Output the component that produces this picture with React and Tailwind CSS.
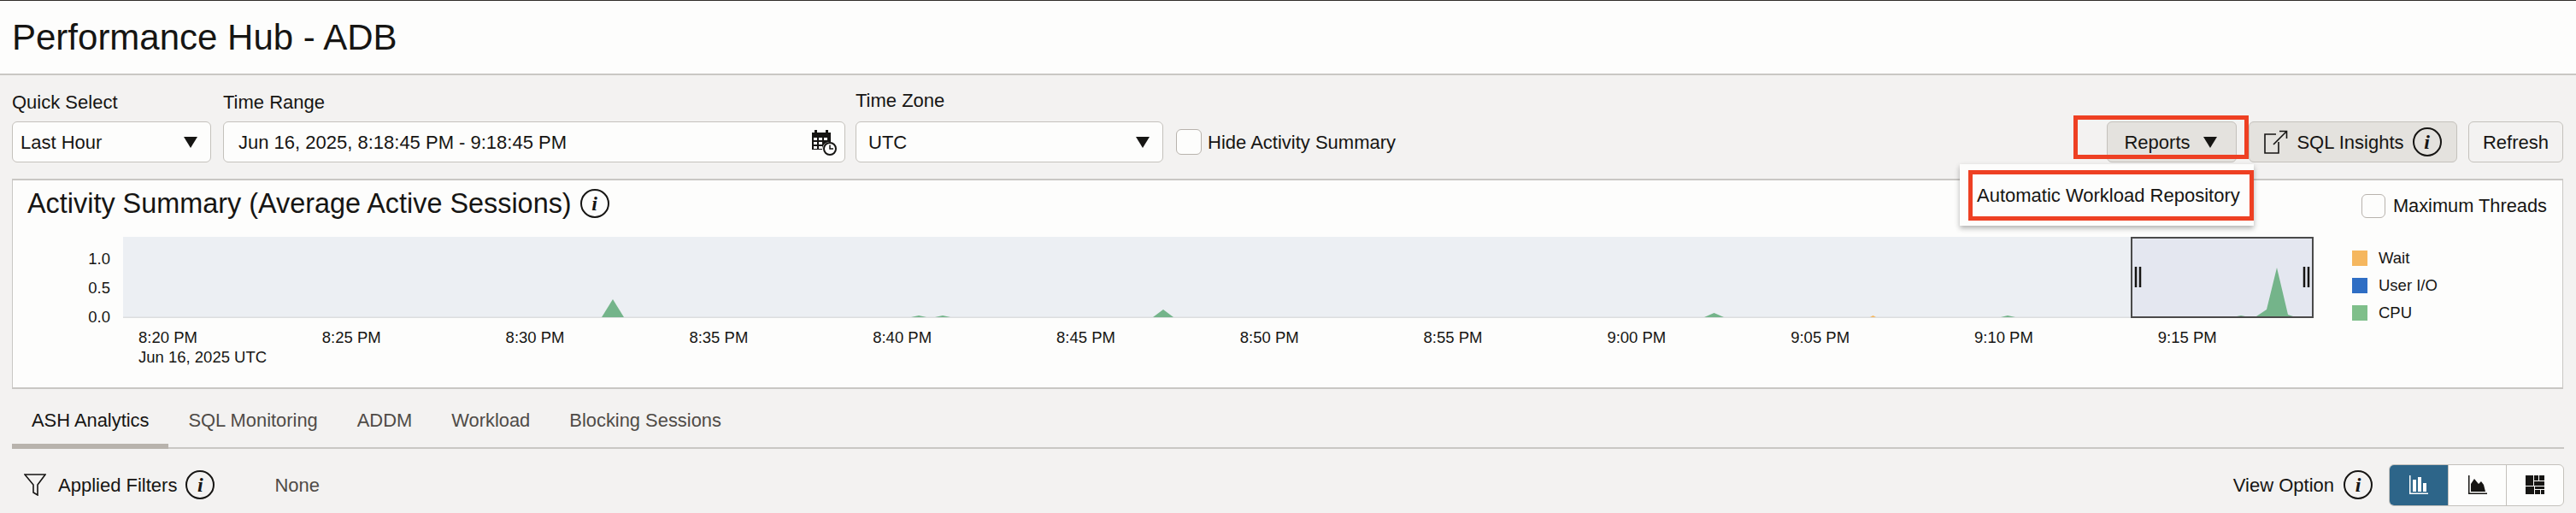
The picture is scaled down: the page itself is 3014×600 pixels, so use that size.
const xTicks = ['8:20 PM','8:25 PM','8:30 PM','8:35 PM','8:40 PM','8:45 PM','8:50 PM','8:55 PM','9:00 PM','9:05 PM','9:10 PM','9:15 PM']
const legend = [['Wait','bg-[#f5b75f]'],['User I/O','bg-[#2f6ec4]'],['CPU','bg-[#7fbf8a]']]
const tabs = ['ASH Analytics','SQL Monitoring','ADDM','Workload','Blocking Sessions']

function Info({ className = '' }) {
  return (
    <span className={`flex h-[34px] w-[34px] shrink-0 items-center justify-center rounded-full border-2 border-[#161513] font-['Liberation_Serif',serif] text-[24px] font-bold italic leading-none ${className}`}>i</span>
  )
}

function Caret() {
  return <svg width="16" height="14" viewBox="0 0 16 14" className="shrink-0"><path d="M0 1h16L8 14z" fill="#161513"/></svg>
}

function CalendarClock() {
  return (
    <svg width="30" height="32" viewBox="0 0 30 32">
      <path d="M1 5h3V2h3v3h10V2h3v3h3v11h-3a9 9 0 0 0-7 9H1z" fill="#161513"/>
      <path d="M3 11h4v3H3zm6 0h4v3H9zm6 0h4v3h-4zM3 16h4v3H3zm6 0h4v3H9zM3 21h4v3H3zm6 0h4v3H9z" fill="#fff"/>
      <circle cx="22" cy="24" r="7" fill="#fff" stroke="#161513" strokeWidth="2"/>
      <path d="M22 19.5V24h4" fill="none" stroke="#161513" strokeWidth="1.5"/>
    </svg>
  )
}

function ActivityChart() {
  return (
    <svg viewBox="144 277 2563 95" className="block h-[95px] w-[2563px]">
      <rect x="144" y="277" width="2563" height="95" fill="#eceff3"/>
      <rect x="144" y="370.5" width="2563" height="1.5" fill="#dcdedf"/>
      <g fill="#74b48a">
        <path d="M704 371L717 350L730 371z"/>
        <path d="M1066 371L1075 369L1084 371z"/>
        <path d="M1094 371L1103 369L1112 371z"/>
        <path d="M1349 371L1361 362L1373 371z"/>
        <path d="M1994 371L2005.5 366L2017 371z"/>
        <path d="M2341 371L2349 369L2358 371z"/>
      </g>
      <path d="M2188 371L2191.5 369L2195 371z" fill="#f5b75f"/>
      <rect x="2494" y="278" width="212" height="93" fill="#e4e7f0" stroke="#4a4a4a" strokeWidth="2"/>
      <path d="M2617 370L2622 369L2627 370zM2640 370L2652 362L2664 313L2677 368L2683 370z" fill="#74b48a"/>
      <path d="M2499 312v24M2504 312v24M2696 312v24M2701 312v24" stroke="#161513" strokeWidth="2.5"/>
    </svg>
  )
}

export default function App() {
  return (
    <div className="h-[600px] w-[3014px] overflow-hidden border-t border-[#312d2a] bg-[#f3f2f1] font-['Liberation_Sans',sans-serif] text-[22px] text-[#161513]">
      <header className="flex h-[87px] items-center border-b-2 border-[#c9c7c4] bg-[#fdfdfc] pl-[14px]">
        <h1 className="text-[42px] leading-none">Performance Hub - ADB</h1>
      </header>

      <div className="flex h-[121px] items-start pl-[14px] pr-[15px] pt-[17px]">
        <div className="w-[233px]">
          <div className="h-[37px] leading-[30px]">Quick Select</div>
          <div className="flex h-[48px] items-center justify-between rounded-md border border-[#c4c1bc] bg-[#fdfdfc] pl-[9px] pr-[15px]">
            Last Hour <Caret/>
          </div>
        </div>
        <div className="ml-[14px] w-[728px]">
          <div className="h-[37px] leading-[30px]">Time Range</div>
          <div className="flex h-[48px] items-center justify-between rounded-md border border-[#c4c1bc] bg-[#fdfdfc] pl-[17px] pr-[9px]">
            Jun 16, 2025, 8:18:45 PM - 9:18:45 PM <CalendarClock/>
          </div>
        </div>
        <div className="ml-[12px] w-[360px]">
          <div className="h-[37px] leading-[26px]">Time Zone</div>
          <div className="flex h-[48px] items-center justify-between rounded-md border border-[#c4c1bc] bg-[#fdfdfc] pl-[14px] pr-[15px]">
            UTC <Caret/>
          </div>
        </div>
        <label className="ml-[15px] mt-[37px] flex h-[48px] items-center gap-[7px]">
          <span className="h-[30px] w-[30px] rounded-md border border-[#b8b3ad] bg-[#fdfdfc]"></span>
          Hide Activity Summary
        </label>

        <div className="relative ml-auto mt-[37px] flex items-center">
          <button className="flex h-[48px] w-[152px] items-center justify-center gap-[15px] rounded-md border border-[#c4c1bc] bg-[#e4e2de] pr-[3px]">
            Reports <Caret/>
          </button>
          <button className="ml-[14px] flex h-[48px] w-[244px] items-center justify-center gap-[10px] rounded-md border border-[#c4c1bc] bg-[#e4e2de]">
            <svg width="28" height="28" viewBox="0 0 28 28" fill="none" stroke="#161513" strokeWidth="1.6">
              <path d="M14 5H1v22h16V14M11 17L26 2M18 1.5h8.5V10"/>
            </svg>
            SQL Insights
            <Info/>
          </button>
          <button className="ml-[13px] h-[48px] w-[111px] rounded-md border border-[#c4c1bc] bg-[#f3f2f1]">Refresh</button>

          <div className="absolute left-[-39px] top-[-7px] h-[51px] w-[205px] border-[5px] border-[#ee4023]"></div>
          <div className="absolute left-[-172px] top-[50px] z-10 h-[72px] w-[344px] bg-[#fdfdfc] shadow-[0_3px_6px_rgba(0,0,0,0.3)]">
            <div className="ml-[10px] mt-[7px] flex h-[59px] w-[334px] items-center border-[5px] border-[#ee4023] pl-[5px]">Automatic Workload Repository</div>
          </div>
        </div>
      </div>

      <section className="mx-[14px] mr-[15px] h-[246px] border-x border-y-2 border-[#c9c7c4] bg-[#fdfdfc]">
        <div className="flex h-[66px] items-start justify-between pl-[17px] pr-[18px]">
          <div className="mt-[10px] flex items-center gap-[10px]">
            <h2 className="text-[32.4px] leading-[34px]">Activity Summary (Average Active Sessions)</h2>
            <Info/>
          </div>
          <label className="mt-[14px] flex items-center gap-[9px] text-[21.8px]">
            <span className="h-[28px] w-[28px] rounded-md border border-[#b8b3ad]"></span>
            Maximum Threads
          </label>
        </div>

        <div className="flex">
          <div className="flex h-[104px] w-[114px] flex-col items-end justify-between pt-[15px] text-[18.5px] leading-[21px]">
            <span>1.0</span>
            <span>0.5</span>
            <span>0.0</span>
          </div>
          <div className="ml-[15px] w-[2563px]">
            <ActivityChart/>
            <div className="mt-[11px] flex pl-[18px] text-[18.5px] leading-[23px]">
              {xTicks.map((t,i)=>(
                <div key={t} className="w-[214.8px] shrink-0">
                  {t}
                  {i===0 && <div className="whitespace-nowrap">Jun 16, 2025 UTC</div>}
                </div>
              ))}
            </div>
          </div>
          <div className="ml-[45px] flex flex-col gap-[14px] pt-[16px] text-[18.5px]">
            {legend.map(([l,c])=>(
              <div key={l} className="flex h-[18px] items-center gap-[13px]">
                <span className={`h-[18px] w-[18px] ${c}`}></span>{l}
              </div>
            ))}
          </div>
        </div>
      </section>

      <nav className="mx-[14px] mt-[18px] flex h-[52px] border-b-2 border-[#c9c7c4] text-[21.9px] text-[#4f4b47]">
        {tabs.map((t,i)=>(
          <div key={t} className={`h-[52px] px-[23px] pt-[3px] ${i===0?'border-b-[6px] border-[#b8b3ad] text-[#161513]':''}`}>{t}</div>
        ))}
      </nav>

      <div className="mx-[14px] mt-[17px] flex h-[50px] items-center">
        <svg width="26" height="26" viewBox="0 0 26 26" fill="none" stroke="#161513" strokeWidth="1.6" className="ml-[14px]">
          <path d="M1 1h24L16 13v12l-5-3V13z"/>
        </svg>
        <span className="ml-[14px]">Applied Filters</span>
        <Info className="ml-[10px]"/>
        <span className="ml-[70px] text-[#4f4b47]">None</span>
        <span className="ml-auto">View Option</span>
        <Info className="ml-[11px]"/>
        <div className="ml-[19px] flex h-[49px] w-[205px] overflow-hidden rounded-md border border-[#c4c1bc] bg-[#fdfdfc]">
          <div className="flex w-[68px] items-center justify-center bg-[#2d6589]">
            <svg width="22" height="22" viewBox="0 0 22 22" fill="#fff"><path d="M0 0h1.5v20.5H22V22H0z"/><path d="M4 5h4v14H4zM10 2h4v17h-4zM16 9h4v10h-4z"/></svg>
          </div>
          <div className="flex w-[69px] items-center justify-center border-x border-[#c4c1bc]">
            <svg width="22" height="22" viewBox="0 0 22 22" fill="#161513"><path d="M0 0h1.5v20.5H22V22H0z"/><path d="M3 19V10l4-6 5 6 3-3 3 4 2 8z"/></svg>
          </div>
          <div className="flex flex-1 items-center justify-center">
            <svg width="22" height="22" viewBox="0 0 22 22" fill="#161513"><path d="M0 0h9v12H0zM10 0h5v6h-5zM16 0h6v6h-6zM10 7h12v5H10zM0 13h10v9H0zM11 13h11v3H11zM11 17h6v5h-6zM18 17h4v5h-4z"/></svg>
          </div>
        </div>
      </div>
    </div>
  )
}
